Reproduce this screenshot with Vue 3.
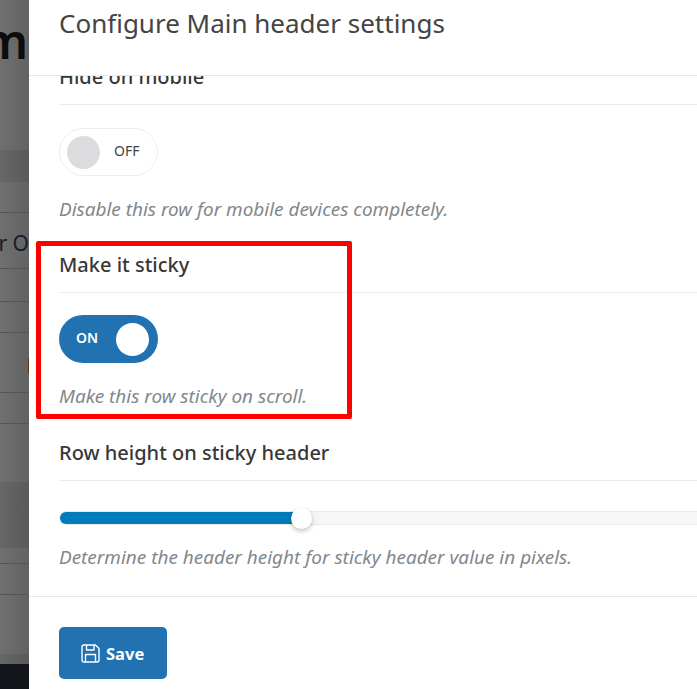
<script setup>
// rows of the dimmed page behind the panel
const pageRows = [
  { h: 150, text: 'm', kind: 'big' },
  { h: 32, dark: true },
  { h: 31, line: true },
  { h: 56, line: true, text: 'r O', kind: 'mid' },
  { h: 33, line: true },
  { h: 31, line: true },
  { h: 60, line: true, mark: true },
  { h: 31, line: true },
  { h: 58 },
  { h: 66, dark: true },
  { h: 16, line: true },
  { h: 31, line: true },
  { h: 59 },
  { h: 10, dark: true }
]
const sliderValue = 241
</script>

<template>
  <div class="screen">
    <aside class="page-behind">
      <div
        v-for="(row, i) in pageRows"
        :key="i"
        class="page-row"
        :class="{ dark: row.dark, line: row.line }"
        :style="{ height: row.h + 'px' }"
      >
        <span v-if="row.text" :class="row.kind">{{ row.text }}</span>
        <i v-if="row.mark" class="mark"></i>
      </div>
      <div class="page-footer"></div>
    </aside>

    <section class="panel">
      <header class="panel-head">
        <h2>Configure Main header settings</h2>
      </header>

      <div class="panel-body">
        <div class="scrolled">
          <div class="field">
            <h3>Hide on mobile</h3>
            <div class="toggle off">
              <span class="knob"></span>
              <span class="state">OFF</span>
            </div>
            <p class="hint">Disable this row for mobile devices completely.</p>
          </div>

          <div class="field">
            <h3>Make it sticky</h3>
            <div class="toggle on">
              <span class="state">ON</span>
              <span class="knob"></span>
            </div>
            <p class="hint">Make this row sticky on scroll.</p>
            <div class="highlight"></div>
          </div>

          <div class="field slider-field">
            <h3>Row height on sticky header</h3>
            <div class="slider">
              <div class="slider-fill" :style="{ width: sliderValue + 'px' }">
                <span class="slider-thumb"></span>
              </div>
            </div>
            <p class="hint">Determine the header height for sticky header value in pixels.</p>
          </div>
        </div>
      </div>

      <footer class="panel-foot">
        <button class="save" type="button">
          <svg width="19" height="19" viewBox="0 0 19 19" fill="none" stroke="#fff" stroke-width="1.4" stroke-linejoin="round">
            <path d="M3 1h11.5L18 4.5V16a2 2 0 0 1-2 2H3a2 2 0 0 1-2-2V3a2 2 0 0 1 2-2z" />
            <path d="M5.5 1v5h7.5V1" />
            <path d="M4.5 18v-7.5h10V18" />
          </svg>
          Save
        </button>
      </footer>
    </section>
  </div>
</template>

<style>
html,
body {
  margin: 0;
  overflow: hidden;
}
</style>

<style scoped>
.screen {
  display: flex;
  height: 689px;
  width: 697px;
  overflow: hidden;
  font-family: "Noto Sans", "Open Sans", sans-serif;
}

/* dimmed page */
.page-behind {
  width: 29px;
  flex-shrink: 0;
  display: flex;
  flex-direction: column;
  background: linear-gradient(90deg, #707070, #626262);
  overflow: hidden;
}
.page-row {
  box-sizing: border-box;
  display: flex;
  align-items: center;
  justify-content: flex-end;
  white-space: nowrap;
  position: relative;
}
.page-row.dark {
  background: rgba(0, 0, 0, 0.08);
}
.page-row.line {
  border-bottom: 1px solid #555;
}
.big {
  font-size: 48px;
  font-weight: 600;
  color: #0c0c0c;
  margin-top: -70px;
  margin-right: 1px;
}
.mid {
  font-size: 21px;
  color: #12202c;
  margin-top: 5px;
}
.mark {
  width: 1px;
  height: 15px;
  background: #5a3a10;
  margin-top: 5px;
}
.page-footer {
  flex: 1;
  background: #12151a;
}

/* panel */
.panel {
  flex: 1;
  min-width: 0;
  display: flex;
  flex-direction: column;
  background: #fff;
}
.panel-head {
  height: 76px;
  box-sizing: border-box;
  padding: 5px 30px 0;
  border-bottom: 1px solid #e8e8e8;
  flex-shrink: 0;
}
.panel-head h2 {
  margin: 0;
  font-size: 26px;
  line-height: 36px;
  font-weight: 400;
  color: #444;
  white-space: nowrap;
}
.panel-body {
  height: 520px;
  overflow: hidden;
  flex-shrink: 0;
}
.scrolled {
  margin-top: -15px;
  padding-left: 30px;
}
.field {
  position: relative;
  margin-bottom: 28px;
}
.field h3 {
  margin: 0;
  height: 43px;
  box-sizing: content-box;
  font-size: 20px;
  line-height: 32px;
  font-weight: 500;
  color: #383838;
  border-bottom: 1px solid #ebebeb;
  margin-right: -1px;
}
.toggle {
  margin-top: 23px;
  width: 99px;
  height: 48px;
  box-sizing: border-box;
  border-radius: 24px;
  display: flex;
  align-items: center;
  font-size: 14px;
}
.toggle .state {
  margin-bottom: 3px;
}
.toggle.off {
  border: 1px solid #eee;
  background: #fff;
  padding-left: 7px;
  color: #444;
}
.toggle.off .state {
  margin-left: 14px;
}
.toggle.on {
  margin-top: 22px;
  margin-bottom: 21px;
  background: #2271b1;
  color: #fff;
  font-weight: 600;
  padding-left: 17px;
}
.toggle.on .knob {
  background: #fff;
  margin-left: 18px;
}
.knob {
  width: 33px;
  height: 33px;
  border-radius: 50%;
  background: #dcdcde;
  flex-shrink: 0;
}
.hint {
  margin: 21px 0 0;
  font-size: 18.95px;
  line-height: 24px;
  font-style: italic;
  color: #82878c;
  white-space: nowrap;
}
.toggle.on + .hint {
  margin: 0;
  padding-bottom: 1px;
}
/* red annotation drawn over the screenshot */
.highlight {
  position: absolute;
  left: -23px;
  top: -8px;
  width: 316px;
  height: 178px;
  box-sizing: border-box;
  border: 5px solid #f00;
  border-radius: 2px;
  pointer-events: none;
}
.slider-field {
  margin-bottom: 27px;
}
.slider {
  margin-top: 30px;
  height: 14px;
  box-sizing: border-box;
  background: #f6f6f6;
  border: 1px solid #e9e9e9;
  border-right: 0;
  border-radius: 7px 0 0 7px;
}
.slider-fill {
  position: relative;
  height: 12px;
  background: #007cba;
  border-radius: 6px 0 0 6px;
}
.slider-thumb {
  position: absolute;
  right: -11px;
  top: -4.5px;
  width: 21px;
  height: 21px;
  border-radius: 50%;
  background: #fff;
  box-shadow: 0 2px 5px rgba(0, 0, 0, 0.25);
}
.slider + .hint {
  margin-top: 20px;
}
.panel-foot {
  flex: 1;
  border-top: 1px solid #e8e8e8;
  padding: 30px 30px 0;
}
.save {
  display: flex;
  align-items: center;
  gap: 6px;
  width: 108px;
  height: 52px;
  box-sizing: border-box;
  padding: 0 0 0 22px;
  border: 0;
  border-radius: 5px;
  background: #2271b1;
  color: #fff;
  font-family: inherit;
  font-size: 16.5px;
  font-weight: 700;
}
</style>
